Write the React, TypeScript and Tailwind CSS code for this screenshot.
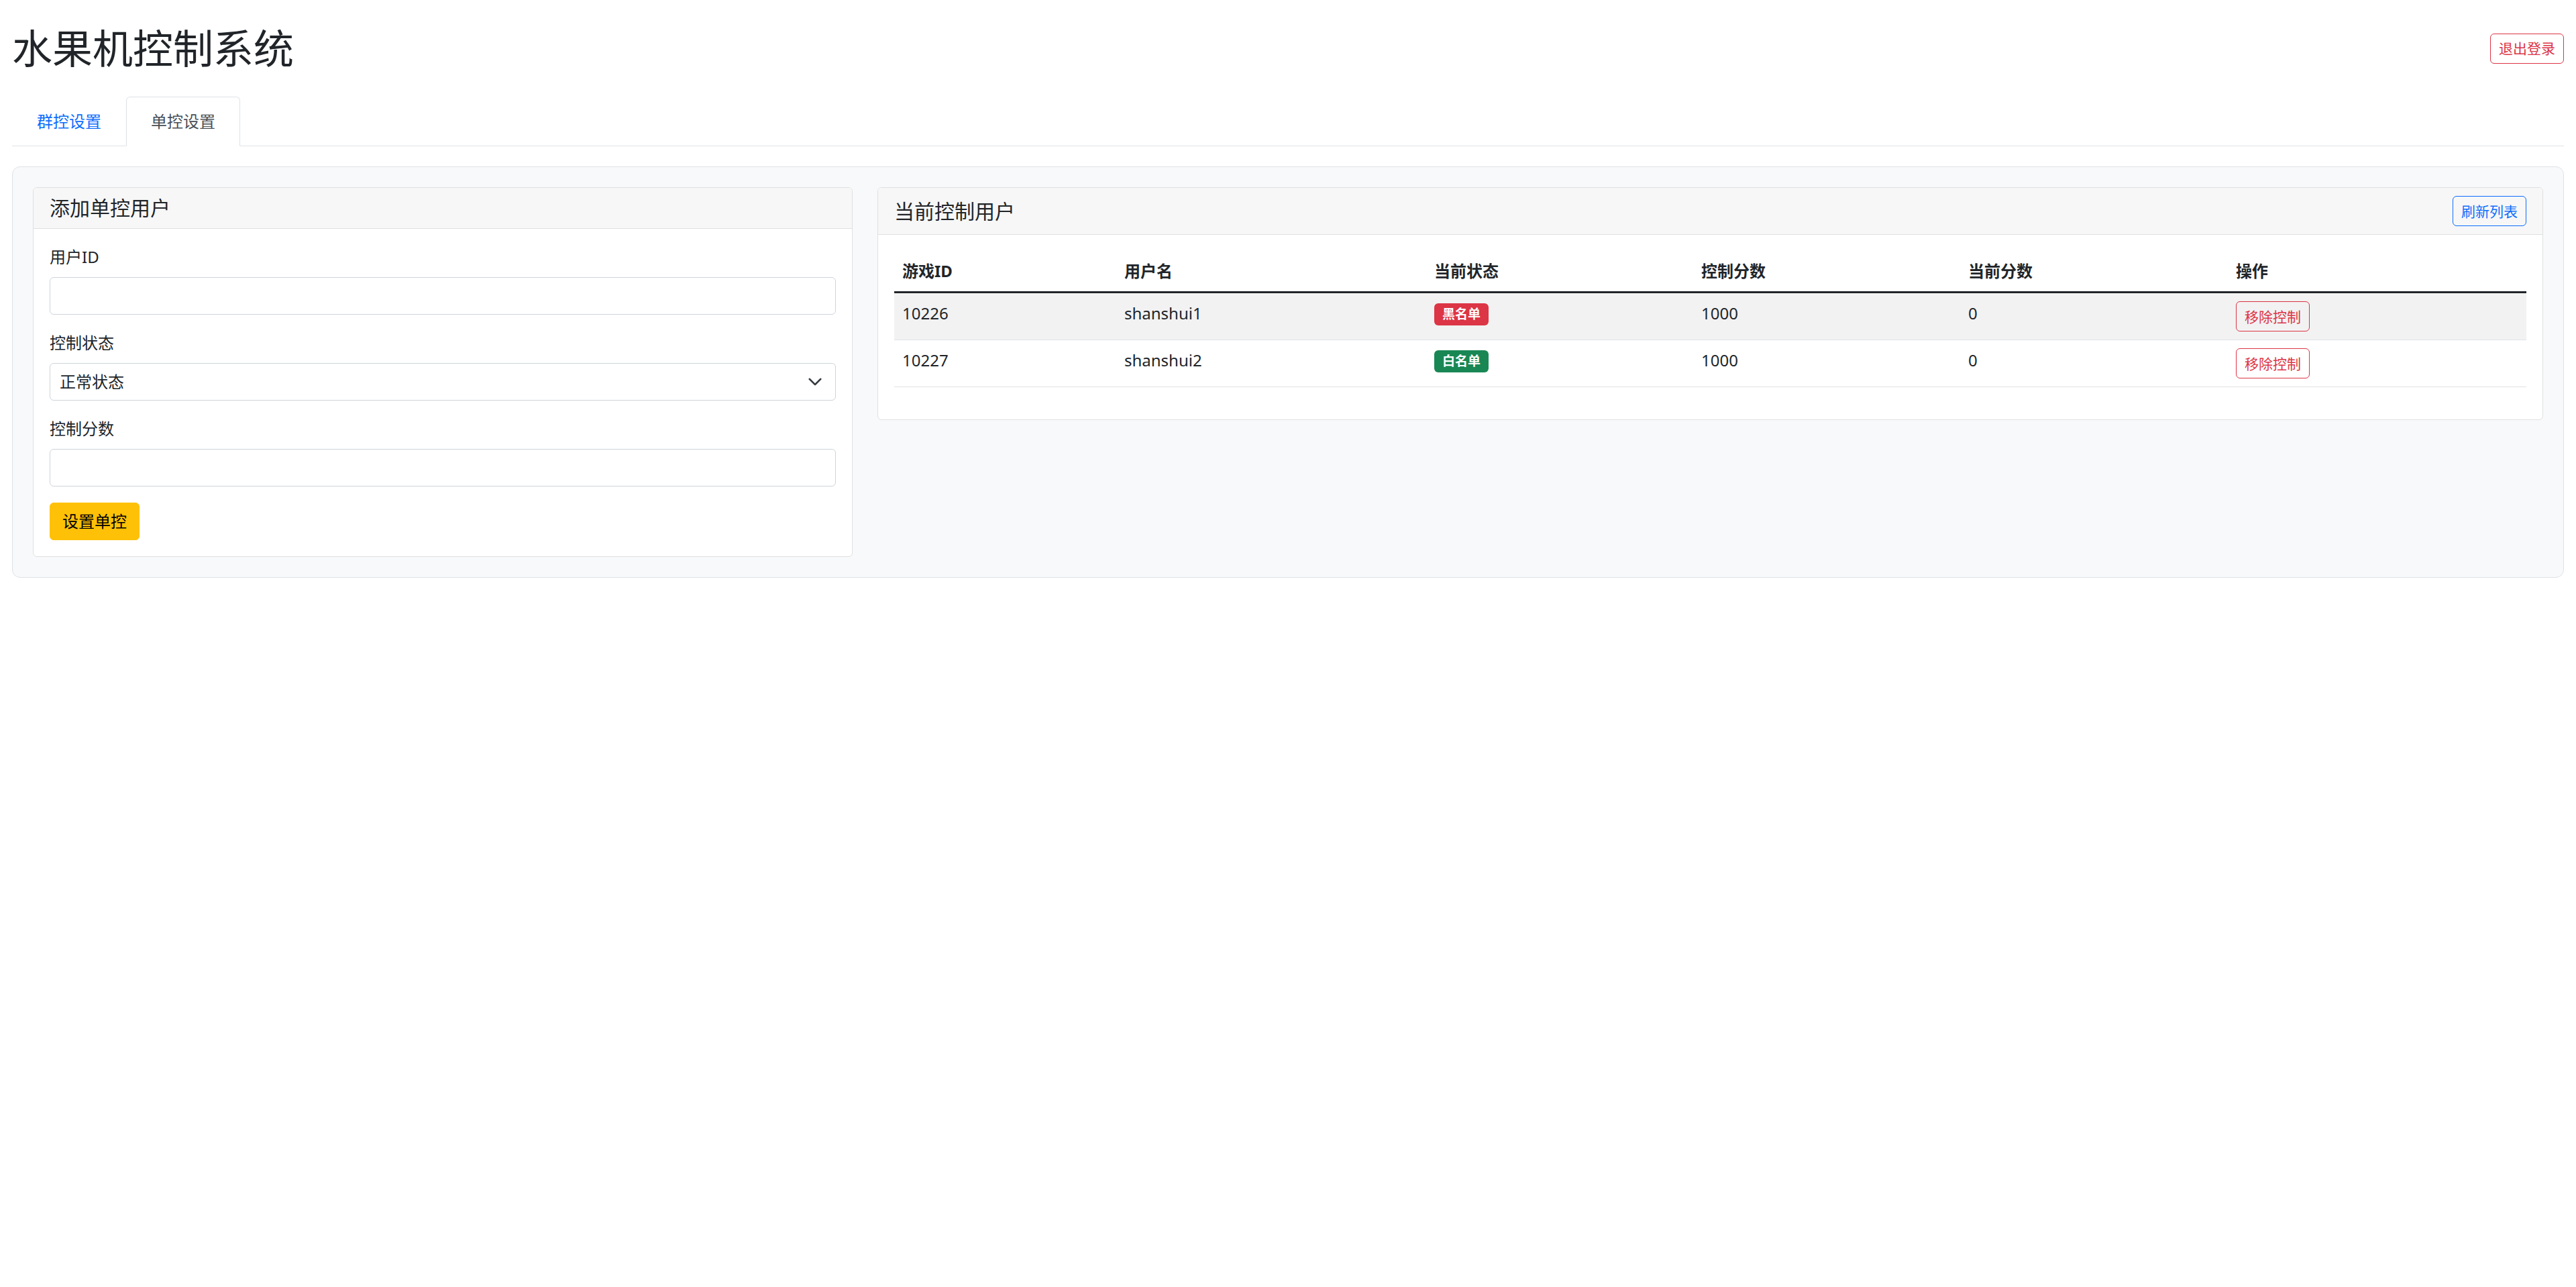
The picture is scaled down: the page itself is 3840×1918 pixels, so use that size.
import React from 'react';

const users = [
  { id: '10226', name: 'shanshui1', status: 'black', score: '1000', current: '0' },
  { id: '10227', name: 'shanshui2', status: 'white', score: '1000', current: '0' },
];

const Field = ({ label, children }: { label: string; children: React.ReactNode }) => (
  <div className="mb-[24px]">
    <label className="block mb-[12px]">{label}</label>
    {children}
  </div>
);

const App = () => {
  return (
    <div className="min-h-screen bg-white text-[#212529] text-[24px] leading-[36px] font-['Noto_Sans','Noto_Sans_CJK_SC',sans-serif]">
      <div className="px-[18px] pt-[36px]">
        {/* header */}
        <div className="flex items-center justify-between h-[72px] mb-[36px]">
          <h1 className="text-[60px] leading-[72px] font-normal">水果机控制系统</h1>
          <button className="h-[45px] px-[12px] border border-[#dc3545] text-[#dc3545] text-[21px] leading-[30px] rounded-[6px]">
            退出登录
          </button>
        </div>

        {/* tabs */}
        <nav className="flex border-b border-[#dee2e6]">
          <button className="-mb-px px-[36px] py-[18px] border border-transparent rounded-t-[6px] text-[#0d6efd]">
            群控设置
          </button>
          <button className="-mb-px px-[36px] py-[18px] border border-[#dee2e6] border-b-white bg-white rounded-t-[6px] text-[#495057]">
            单控设置
          </button>
        </nav>

        {/* tab content */}
        <div className="mt-[30px] p-[30px] bg-[#f8f9fa] border border-[#dee2e6] rounded-[12px]">
          <div className="grid grid-cols-[1222px_1fr] gap-[37px] items-start">
            {/* add user card */}
            <div className="bg-white border border-[#dfe0e1] rounded-[6px] overflow-hidden">
              <div className="px-[24px] py-[12px] bg-[#f7f7f7] border-b border-[#dfe0e1] text-[30px] leading-[36px]">
                添加单控用户
              </div>
              <div className="p-[24px]">
                <Field label="用户ID">
                  <input type="text" className="block w-full h-[56px] px-[15px] border border-[#ced4da] rounded-[6px] bg-white outline-none" />
                </Field>
                <Field label="控制状态">
                  <div className="relative">
                    <select className="block w-full h-[56px] pl-[14px] pr-[54px] border border-[#ced4da] rounded-[6px] bg-white appearance-none outline-none">
                      <option>正常状态</option>
                      <option>黑名单</option>
                      <option>白名单</option>
                    </select>
                    <svg
                      className="pointer-events-none absolute right-[20px] top-1/2 -translate-y-1/2 w-[22px] h-[22px]"
                      viewBox="0 0 16 16"
                      fill="none"
                      stroke="#343a40"
                      strokeWidth="2"
                      strokeLinecap="round"
                      strokeLinejoin="round"
                    >
                      <path d="M2 5l6 6 6-6" />
                    </svg>
                  </div>
                </Field>
                <Field label="控制分数">
                  <input type="number" className="block w-full h-[56px] px-[15px] border border-[#ced4da] rounded-[6px] bg-white outline-none" />
                </Field>
                <button className="h-[56px] px-[18px] bg-[#ffc107] border border-[#ffc107] text-black rounded-[6px]">
                  设置单控
                </button>
              </div>
            </div>

            {/* current users card */}
            <div className="bg-white border border-[#dfe0e1] rounded-[6px] overflow-hidden">
              <div className="flex items-center justify-between px-[24px] py-[12px] bg-[#f7f7f7] border-b border-[#dfe0e1]">
                <h5 className="text-[30px] leading-[36px]">当前控制用户</h5>
                <button className="h-[45px] px-[12px] border border-[#0d6efd] text-[#0d6efd] text-[21px] leading-[30px] rounded-[6px]">
                  刷新列表
                </button>
              </div>
              <div className="p-[24px]">
                <table className="w-full table-fixed border-collapse mb-[24px]">
                  <colgroup>
                    <col className="w-[331px]" />
                    <col className="w-[462px]" />
                    <col className="w-[398px]" />
                    <col className="w-[398px]" />
                    <col className="w-[399px]" />
                    <col />
                  </colgroup>
                  <thead>
                    <tr>
                      {['游戏ID', '用户名', '当前状态', '控制分数', '当前分数', '操作'].map((h) => (
                        <th key={h} className="text-left font-bold px-[12px] py-[12px] align-top border-b-[3px] border-[#212529]">
                          {h}
                        </th>
                      ))}
                    </tr>
                  </thead>
                  <tbody>
                    {users.map((u, i) => (
                      <tr key={u.id} className={i % 2 === 0 ? 'bg-[#f2f2f2]' : 'bg-white'}>
                        <td className="px-[12px] py-[12px] align-top border-b border-[#dee2e6]">{u.id}</td>
                        <td className="px-[12px] py-[12px] align-top border-b border-[#dee2e6]">{u.name}</td>
                        <td className="px-[12px] py-[12px] align-top border-b border-[#dee2e6]">
                          {u.status === 'black' ? (
                            <span className="inline-flex align-top items-center mt-[3px] h-[33px] px-[12px] rounded-[6px] bg-[#dc3545] text-white text-[19px] font-bold leading-none">
                              黑名单
                            </span>
                          ) : (
                            <span className="inline-flex align-top items-center mt-[3px] h-[33px] px-[12px] rounded-[6px] bg-[#198754] text-white text-[19px] font-bold leading-none">
                              白名单
                            </span>
                          )}
                        </td>
                        <td className="px-[12px] py-[12px] align-top border-b border-[#dee2e6]">{u.score}</td>
                        <td className="px-[12px] py-[12px] align-top border-b border-[#dee2e6]">{u.current}</td>
                        <td className="px-[12px] py-[12px] align-top border-b border-[#dee2e6]">
                          <button className="block h-[45px] px-[12px] border border-[#dc3545] text-[#dc3545] text-[21px] leading-[30px] rounded-[6px]">
                            移除控制
                          </button>
                        </td>
                      </tr>
                    ))}
                  </tbody>
                </table>
              </div>
            </div>
          </div>
        </div>
      </div>
    </div>
  );
};

export default App;
